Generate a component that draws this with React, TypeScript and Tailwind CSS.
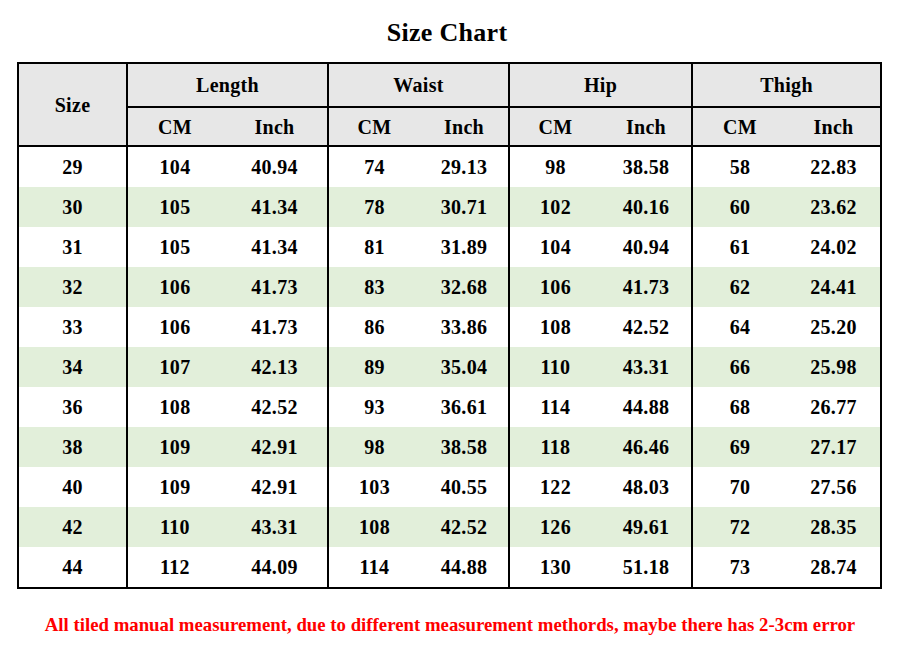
import React from "react";

const rows: string[][] = [
  ["29", "104", "40.94", "74", "29.13", "98", "38.58", "58", "22.83"],
  ["30", "105", "41.34", "78", "30.71", "102", "40.16", "60", "23.62"],
  ["31", "105", "41.34", "81", "31.89", "104", "40.94", "61", "24.02"],
  ["32", "106", "41.73", "83", "32.68", "106", "41.73", "62", "24.41"],
  ["33", "106", "41.73", "86", "33.86", "108", "42.52", "64", "25.20"],
  ["34", "107", "42.13", "89", "35.04", "110", "43.31", "66", "25.98"],
  ["36", "108", "42.52", "93", "36.61", "114", "44.88", "68", "26.77"],
  ["38", "109", "42.91", "98", "38.58", "118", "46.46", "69", "27.17"],
  ["40", "109", "42.91", "103", "40.55", "122", "48.03", "70", "27.56"],
  ["42", "110", "43.31", "108", "42.52", "126", "49.61", "72", "28.35"],
  ["44", "112", "44.09", "114", "44.88", "130", "51.18", "73", "28.74"],
];

// columns that end a group get a right border
const groupEnd = [0, 2, 4, 6];

export default function App() {
  return (
    <div
      className="w-[900px] h-[655px] bg-white text-black"
      style={{ fontFamily: '"Liberation Serif", "Times New Roman", serif' }}
    >
      <div className="h-[62px] pt-[18px] pr-[6px] text-center text-[26px] leading-[30px] font-bold tracking-[0.3px]">
        Size Chart
      </div>
      <div className="ml-[17px] w-[865px] border-2 border-black font-bold text-[20px] tracking-[0.3px]">
        <div className="grid grid-cols-[109px_94px_107px_91px_90px_91px_92px_94px_93px] grid-rows-[44px_39px] bg-[#e7e7e7]">
          <div className="row-span-2 flex items-center justify-center border-r-2 border-b-2 border-black">
            Size
          </div>
          {["Length", "Waist", "Hip", "Thigh"].map((g, i) => (
            <div
              key={g}
              className={`col-span-2 flex items-center justify-center border-b-2 border-black ${
                i < 3 ? "border-r-2" : ""
              }`}
            >
              {g}
            </div>
          ))}
          {[0, 1, 2, 3].map((i) => (
            <React.Fragment key={i}>
              <div className="flex items-center justify-center border-b-2 border-black">CM</div>
              <div
                className={`flex items-center justify-center border-b-2 border-black ${
                  i < 3 ? "border-r-2" : ""
                }`}
              >
                Inch
              </div>
            </React.Fragment>
          ))}
        </div>
        {rows.map((r, ri) => (
          <div
            key={ri}
            className={`grid grid-cols-[109px_94px_107px_91px_90px_91px_92px_94px_93px] h-[40px] ${
              ri % 2 === 1 ? "bg-[#e2efda]" : "bg-white"
            }`}
          >
            {r.map((c, ci) => (
              <div
                key={ci}
                className={`flex items-center justify-center border-black ${
                  groupEnd.includes(ci) ? "border-r-2" : ""
                }`}
              >
                {c}
              </div>
            ))}
          </div>
        ))}
      </div>
      <div className="mt-[24px] text-center text-[18.8px] leading-[24px] font-bold text-[#ff0000]">
        All tiled manual measurement, due to different measurement methords, maybe there has 2-3cm error
      </div>
    </div>
  );
}
